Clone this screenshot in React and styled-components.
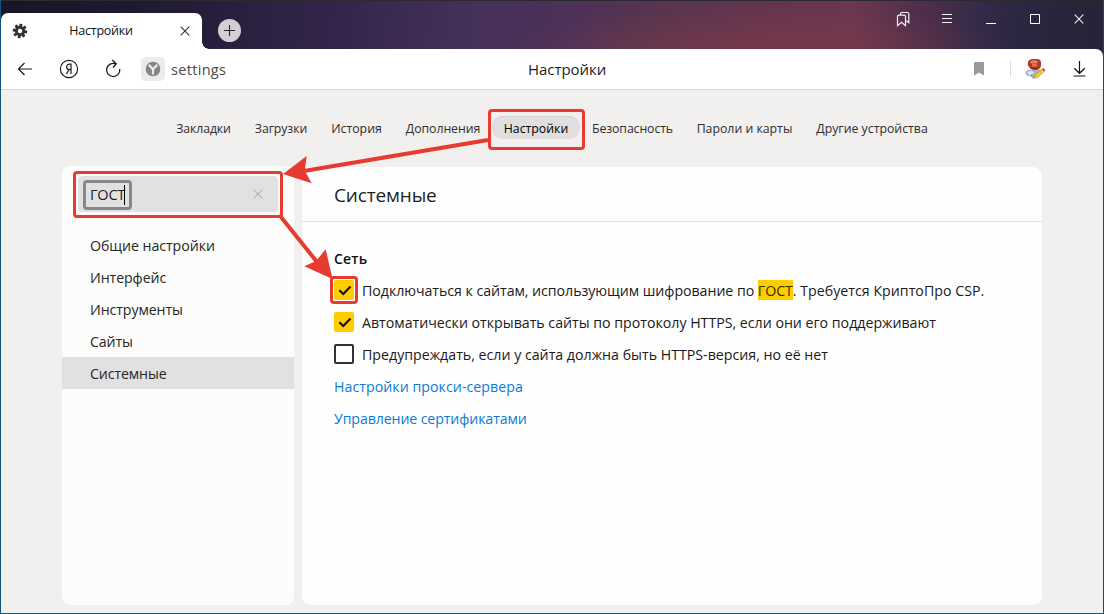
import React from "react";
import styled, { createGlobalStyle } from "styled-components";

const GlobalStyle = createGlobalStyle`
  * { box-sizing: border-box; }
  body { margin: 0; overflow: hidden; font-family: "Open Sans", "Noto Sans", sans-serif; color: #1a1a1a; }
`;

const Window = styled.div`
  position: relative;
  width: 1104px;
  height: 614px;
  display: flex;
  flex-direction: column;
  border: solid #1d5a68;
  border-width: 0 1px 1px 1px;
  border-left-color: #10567a;
  border-right-color: #154a6c;
  background: #f1f0ee;
`;

const TitleBar = styled.header`
  height: 49px;
  flex: none;
  display: flex;
  align-items: flex-start;
  border-top: 1px solid #2c2a30;
  background:
    radial-gradient(ellipse 260px 50px at 760px 54px, rgba(136, 60, 70, 0.6), transparent),
    linear-gradient(97deg, #171526 0, #1f1930 130px, #2c2242 270px, #33244a 330px, #443058 460px, #4c3158 560px, #57344f 650px, #653550 780px, #6b3650 850px, #4c2e4b 920px, #332a47 975px, #2a2640 1020px, #272236 1104px);
`;

const Tab = styled.div`
  width: 201px;
  height: 36px;
  margin-top: 12px;
  display: flex;
  align-items: center;
  position: relative;
  padding: 0 12px 0 11px;
  border-radius: 7px 7px 0 0;
  background: #fff;

  &::after {
    content: "";
    position: absolute;
    left: 100%;
    bottom: 0;
    width: 7px;
    height: 7px;
    background: radial-gradient(circle at 100% 0, transparent 6.5px, #fff 7px);
  }
`;

const TabTitle = styled.span`
  flex: 1;
  text-align: center;
  font-size: 12.5px;
  line-height: 38px;
  letter-spacing: -0.25px;
  color: #111;
  padding-right: 6px;
`;

const NewTab = styled.div`
  width: 23px;
  height: 23px;
  margin: 18px 0 0 16px;
  border-radius: 50%;
  background: #d2ced6;
  display: flex;
`;

const WindowButtons = styled.div`
  margin-left: auto;
  margin-right: 2px;
  display: flex;
`;

const WindowButton = styled.div`
  width: 44px;
  height: 36px;
  display: flex;
  align-items: center;
  justify-content: center;
`;

const Toolbar = styled.div`
  height: 41px;
  flex: none;
  background: #282438;
`;

const ToolbarSurface = styled.div`
  height: 41px;
  display: grid;
  grid-template-columns: 527px 1fr auto;
  align-items: center;
  background: #fff;
  border-bottom: 1px solid #d9d8dc;
  border-top-right-radius: 7px;
`;

const ToolGroup = styled.div`
  display: flex;
  align-items: center;
  height: 40px;
`;

const ToolIcon = styled.div`
  width: ${(p) => p.$w || 44}px;
  height: 40px;
  flex: none;
  display: flex;
  align-items: center;
  justify-content: center;
`;

const SiteBadge = styled.div`
  width: 24px;
  height: 24px;
  margin-left: 4px;
  border-radius: 5px;
  background: #ebebeb;
  display: flex;
`;

const Address = styled.span`
  margin-left: 6px;
  font-size: 14.5px;
  line-height: 40px;
  padding-top: 1px;
  letter-spacing: 0.32px;
  color: #4a4a4a;
`;

const PageTitle = styled.span`
  font-size: 15px;
  line-height: 40px;
  letter-spacing: -0.05px;
  color: #1c1c1c;
`;

const Separator = styled.div`
  width: 1px;
  height: 16px;
  background: #dedede;
`;

const Nav = styled.nav`
  height: 76px;
  flex: none;
  display: flex;
  padding: 26px 0 0 163px;
`;

const NavItem = styled.div`
  width: ${(p) => p.$w}px;
  height: 23px;
  flex: none;
  border-radius: 12px;
  text-align: center;
  white-space: nowrap;
  font-size: 12.3px;
  line-height: 26px;
  letter-spacing: ${(p) => p.$ls}px;
  color: ${(p) => (p.$active ? "#000" : "#2e2e2e")};
  background: ${(p) => (p.$active ? "#e0dfdd" : "transparent")};
  box-shadow: ${(p) => (p.$active ? "inset 0 1px 0 #d3d2d0" : "none")};
`;

const Content = styled.main`
  height: 439px;
  display: flex;
  gap: 8px;
  padding-left: 61px;
`;

const Sidebar = styled.aside`
  width: 232px;
  border-radius: 8px;
  background: #fcfcfa;
  padding-top: 10px;
`;

const Search = styled.div`
  height: 36px;
  width: 200px;
  margin: 0 0 17px 16px;
  padding: 0 15px 0 5px;
  display: flex;
  align-items: center;
  justify-content: space-between;
  border-radius: 4px;
  background: #e1e1e1;
`;

const Query = styled.div`
  width: 49px;
  height: 30px;
  margin-top: 1px;
  padding-left: 4px;
  display: flex;
  align-items: center;
  border: 3px solid #878787;
  border-radius: 4px;
  font-size: 14.5px;
  letter-spacing: -0.2px;
  color: #222;
`;

const Caret = styled.i`
  width: 1px;
  height: 20px;
  margin-left: -1px;
  background: #000;
`;

const MenuItem = styled.div`
  height: 32px;
  padding-left: 28px;
  font-size: 14.2px;
  line-height: 34px;
  letter-spacing: ${(p) => p.$ls}px;
  color: #262626;
  background: ${(p) => (p.$active ? "#e1e1e1" : "transparent")};
`;

const Panel = styled.section`
  width: 740px;
  margin-top: 1px;
  border-radius: 9px;
  background: #fefefe;
`;

const PanelTitle = styled.h1`
  margin: 0;
  height: 55px;
  padding-left: 32px;
  border-bottom: 1px solid #e3e3e3;
  font-size: 19px;
  font-weight: 400;
  line-height: 56px;
  letter-spacing: -0.15px;
  color: #1e1e1e;
`;

const SectionTitle = styled.h2`
  margin: 21px 0 0 32px;
  font-size: 14px;
  font-weight: 600;
  line-height: 32px;
  letter-spacing: 0.2px;
  color: #111;
`;

const Option = styled.div`
  height: 32px;
  padding: 0 0 2px 32px;
  display: flex;
  align-items: center;
  gap: 8px;
  white-space: nowrap;
  font-size: 14.2px;
  letter-spacing: ${(p) => p.$ls}px;
`;

const Checkbox = styled.div`
  width: 20px;
  height: 20px;
  flex: none;
  border-radius: 2px;
  display: flex;
  background: ${(p) => (p.$checked ? "#fc0" : "#fff")};
  border: ${(p) => (p.$checked ? "0" : "2px solid #333")};
`;

const Mark = styled.mark`
  padding: 0.5px 0;
  background: #fc0;
  color: #3a2f00;
`;

const Hint = styled.span`
  letter-spacing: 0.02px;
`;

const Link = styled.a`
  color: #0a7bd6;
`;

const Annotations = styled.svg`
  position: absolute;
  left: -1px;
  top: 0;
`;

const Gear = () => (
  <svg width="16" height="16" viewBox="-8 -8 16 16" fill="#333">
    {[0, 45, 90, 135].map((a) => (
      <rect key={a} x="-1.5" y="-7.2" width="3" height="14.4" rx="0.4" transform={`rotate(${a + 8})`} />
    ))}
    <circle r="5" />
    <circle r="2.2" fill="#fff" />
  </svg>
);

const Cross = ({ size, color }) => (
  <svg width={size} height={size} viewBox="0 0 10 10" stroke={color} strokeWidth="1.1">
    <path d="M.7.7l8.6 8.6M9.3.7L.7 9.3" />
  </svg>
);

const Check = () => (
  <svg width="20" height="20" fill="none" stroke="#111" strokeWidth="2.2">
    <path d="M5.3 10.2l4 3.8 7.2-7.6" />
  </svg>
);

const NAV = [
  ["Закладки", 79, -0.1],
  ["Загрузки", 76, -0.1],
  ["История", 75, 0],
  ["Дополнения", 98, -0.05],
  ["Настройки", 88, 0],
  ["Безопасность", 105, -0.1],
  ["Пароли и карты", 119, 0],
  ["Другие устройства", 136, 0],
];

const MENU = [
  ["Общие настройки", -0.06],
  ["Интерфейс", -0.1],
  ["Инструменты", -0.1],
  ["Сайты", -0.15],
  ["Системные", -0.12],
];

export default function App() {
  return (
    <>
      <GlobalStyle />
      <Window>
        <TitleBar>
          <Tab>
            <Gear />
            <TabTitle>Настройки</TabTitle>
            <Cross size={10} color="#2a3540" />
          </Tab>
          <NewTab>
            <svg width="23" height="23" stroke="#26242c" strokeWidth="1.1">
              <path d="M6 11.5h11M11.5 6v11" />
            </svg>
          </NewTab>
          <WindowButtons>
            <WindowButton>
              <svg width="14" height="16" fill="none" stroke="#f1eef2" strokeWidth="1.2">
                <path d="M1.5 5.5q0-1.3 1.3-1.3h5.400q1.300 0 1.300 1.300v9.200L5.500 11.200l-4 3.500z" />
                <path d="M4.500 4V2.800q0-1.300 1.300-1.300h5.700q1.300 0 1.300 1.300v9l-2.500-2" />
              </svg>
            </WindowButton>
            <WindowButton>
              <svg width="10" height="10" stroke="#f1eef2">
                <path d="M0 .5h10M0 4.500h10M0 8.500h10" />
              </svg>
            </WindowButton>
            <WindowButton>
              <svg width="10" height="10" stroke="#fff">
                <path d="M0 9.500h10" />
              </svg>
            </WindowButton>
            <WindowButton>
              <svg width="10" height="10" fill="none" stroke="#fff">
                <path d="M.5.5h9v9h-9z" />
              </svg>
            </WindowButton>
            <WindowButton>
              <Cross size={10} color="#eee" />
            </WindowButton>
          </WindowButtons>
        </TitleBar>

        <Toolbar>
          <ToolbarSurface>
            <ToolGroup>
              <ToolIcon $w={48}>
                <svg width="16" height="14" fill="none" stroke="#1b1b1b" strokeWidth="1.2">
                  <path d="M15 7H1.500M7.500 1L1.500 7l6 6" />
                </svg>
              </ToolIcon>
              <ToolIcon $w={40}>
                <svg width="20" height="20" fill="none" stroke="#1b1b1b" strokeWidth="1.2">
                  <circle cx="10" cy="10" r="8.600" />
                  <path d="M12 15V5.200H10.400C6.700 5.200 6.700 10.600 10.400 10.600H12M10 10.600L7.500 15" />
                </svg>
              </ToolIcon>
              <ToolIcon $w={48}>
                <svg width="18" height="20" fill="none" stroke="#1b1b1b" strokeWidth="1.3">
                  <path d="M15.700 10A6.600 6.600 0 1 1 11.800 4.900M8.200 1l4 3.800L9 8.500" />
                </svg>
              </ToolIcon>
              <SiteBadge>
                <svg width="24" height="24">
                  <circle cx="12" cy="12" r="7.300" fill="#858585" />
                  <path d="M7.800 7.800L12 12.300l4.200-4.500M12 12v5.500" fill="none" stroke="#ebebeb" strokeWidth="2.2" />
                </svg>
              </SiteBadge>
              <Address>settings</Address>
            </ToolGroup>
            <PageTitle>Настройки</PageTitle>
            <ToolGroup>
              <ToolIcon>
                <svg width="10" height="14" fill="#999">
                  <path d="M1 0h8q1 0 1 1v12.500l-5-3-5 3V1q0-1 1-1z" />
                </svg>
              </ToolIcon>
              <ToolIcon $w={9} />
              <Separator />
              <ToolIcon $w={48}>
                <svg width="22" height="22">
                  <path d="M1 14l4-2.500h11l2 1.500-4 4-4 4-2-1-1-3-4 1z" fill="#a3b6cd" />
                  <path d="M3 14l5-1 2 2-4 2.500z" fill="#e3eaf3" />
                  <path d="M5 18l3-2 1 3z" fill="#7f96b3" />
                  <path d="M4 4q1-3 5-3h4q4 0 4 4v3q-1 4-6 4-4 0-6-3Q3 7 4 4z" fill="#b43a1f" />
                  <path d="M6 3.500q4-2.500 8 0l-1 2H7z" fill="#dc8068" />
                  <path d="M8 6h5v2.500H8z" fill="#d9745c" />
                  <path d="M5 8.500q6 3 11 0-1 3-5 3t-6-3z" fill="#8c2412" />
                  <path d="M10 20l1-3 7-6 2.300 2.300-6.500 6z" fill="#f2cf2a" stroke="#a88618" strokeWidth=".6" />
                  <path d="M18 11l1.500-1 1.800 2-1 1.500z" fill="#dd4434" />
                </svg>
              </ToolIcon>
              <ToolIcon $w={42}>
                <svg width="14" height="16" fill="none" stroke="#111" strokeWidth="1.2">
                  <path d="M6.500 0v12M1.200 7.200L6.500 12.300l5.300-5.100M.5 15h12" />
                </svg>
              </ToolIcon>
              <ToolIcon $w={2} />
            </ToolGroup>
          </ToolbarSurface>
        </Toolbar>

        <Nav>
          {NAV.map(([label, w, ls], i) => (
            <NavItem key={label} $w={w} $ls={ls} $active={i === 4}>
              {label}
            </NavItem>
          ))}
        </Nav>

        <Content>
          <Sidebar>
            <Search>
              <Query>
                ГОСТ
                <Caret />
              </Query>
              <Cross size={10} color="#b3b3b3" />
            </Search>
            {MENU.map(([label, ls], i) => (
              <MenuItem key={label} $ls={ls} $active={i === 4}>
                {label}
              </MenuItem>
            ))}
          </Sidebar>
          <Panel>
            <PanelTitle>Системные</PanelTitle>
            <SectionTitle>Сеть</SectionTitle>
            <Option $ls={-0.045}>
              <Checkbox $checked>
                <Check />
              </Checkbox>
              <span>
                Подключаться к сайтам, использующим шифрование по <Mark>ГОСТ</Mark>
                <Hint>. Требуется КриптоПро CSP.</Hint>
              </span>
            </Option>
            <Option $ls={-0.01}>
              <Checkbox $checked>
                <Check />
              </Checkbox>
              <span>Автоматически открывать сайты по протоколу HTTPS, если они его поддерживают</span>
            </Option>
            <Option $ls={0}>
              <Checkbox />
              <span>Предупреждать, если у сайта должна быть HTTPS-версия, но её нет</span>
            </Option>
            <Option $ls={0.04}>
              <Link>Настройки прокси-сервера</Link>
            </Option>
            <Option $ls={-0.12}>
              <Link>Управление сертификатами</Link>
            </Option>
          </Panel>
        </Content>

        <Annotations width="1104" height="614" fill="none" stroke="#e63b2e" strokeWidth="3">
          <rect x="489.5" y="110.5" width="94" height="38" rx="2.5" />
          <rect x="74.5" y="172.5" width="207" height="44" rx="2.5" />
          <rect x="331.5" y="277.5" width="25" height="25" rx="2.5" />
          <path d="M488 140L304 171M281 217l36 45" strokeWidth="4" />
          <path
            d="M283 174l23.700-18-2 14.500 7 12.800zM332.500 279l-6.800-29.700-9.700 11.700-11.700 5.300z"
            fill="#e63b2e"
            stroke="none"
          />
        </Annotations>
      </Window>
    </>
  );
}
